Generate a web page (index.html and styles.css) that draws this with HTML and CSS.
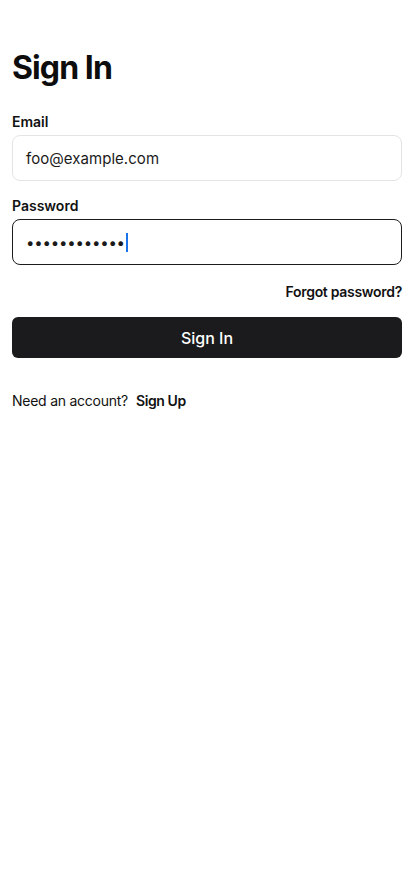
FILE: index.html
```html
<!DOCTYPE html>
<html lang="en">
<head>
<meta charset="utf-8">
<title>Sign In</title>
<link rel="stylesheet" href="styles.css">
</head>
<body>
<main class="page">
  <h1 class="title">Sign In</h1>
  <form class="form">
    <div class="field">
      <label class="label">Email</label>
      <div class="input">foo@example.com</div>
    </div>
    <div class="field">
      <label class="label">Password</label>
      <div class="input input-focus"><span class="dots">••••••••••••</span><span class="caret"></span></div>
    </div>
    <div class="forgot-row"><a class="forgot">Forgot password?</a></div>
    <button type="button" class="btn">Sign In</button>
  </form>
  <p class="signup">Need an account?<a class="signup-link">Sign Up</a></p>
</main>
</body>
</html>
```
FILE: styles.css
```css
* { box-sizing: border-box; }
html, body { margin: 0; padding: 0; background: #fff; }
body {
  font-family: Inter, "Noto Sans", sans-serif;
  color: #111;
}
.page {
  padding: 48px 12px 0;
}
.title {
  margin: 0;
  font-size: 32px;
  font-weight: 700;
  line-height: 40px;
  letter-spacing: -0.9px;
  color: #0d0d0d;
}
.form {
  margin-top: 25px;
  display: flex;
  flex-direction: column;
}
.field {
  display: flex;
  flex-direction: column;
  margin-bottom: 16px;
}
.field + .field { margin-bottom: 0; }
.label {
  font-size: 14px;
  font-weight: 600;
  line-height: 18px;
  margin-bottom: 4px;
  color: #111;
}
.input {
  height: 46px;
  border: 1px solid #e4e4e6;
  border-radius: 8px;
  padding: 0 13px;
  display: flex;
  align-items: center;
  font-size: 15px;
  letter-spacing: 0.05px;
  color: #1a1a1a;
}
.input-focus {
  border-color: #1c1c1e;
}
.dots {
  font-size: 15px;
  letter-spacing: -0.2px;
  color: #1a1a1a;
}
.caret {
  display: inline-block;
  width: 2px;
  height: 19px;
  background: #1a73e8;
  margin-left: 1px;
}
.forgot-row {
  display: flex;
  justify-content: flex-end;
  margin-top: 18px;
}
.forgot {
  font-size: 14px;
  font-weight: 600;
  line-height: 18px;
  letter-spacing: -0.3px;
  color: #111;
}
.btn {
  margin-top: 16px;
  height: 41px;
  border: none;
  border-radius: 6px;
  background: #1b1b1d;
  color: #fff;
  font-family: inherit;
  font-size: 16px;
  font-weight: 500;
}
.signup {
  margin: 33px 0 0;
  font-size: 14px;
  line-height: 20px;
  letter-spacing: -0.25px;
  color: #111;
}
.signup-link {
  margin-left: 8px;
  font-weight: 600;
  letter-spacing: -0.4px;
}
```
